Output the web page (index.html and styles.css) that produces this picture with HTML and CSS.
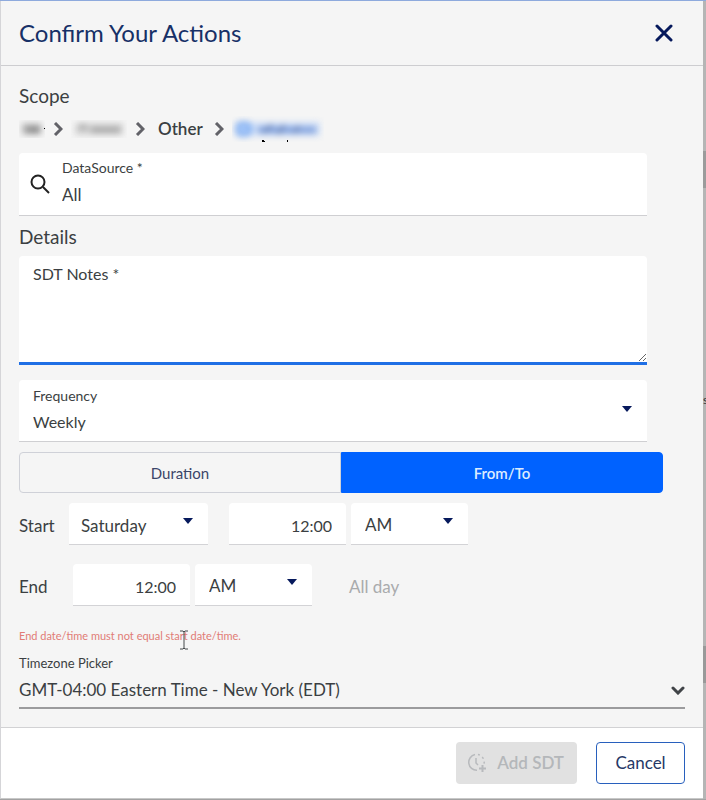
FILE: index.html
```html
<!DOCTYPE html>
<html lang="en">
<head>
<meta charset="utf-8">
<meta name="viewport" content="width=device-width, initial-scale=1">
<title>Confirm Your Actions</title>
<link rel="stylesheet" href="styles.css">
</head>
<body>
<main class="dialog" role="dialog" aria-labelledby="title">
  <header class="dialog-header">
    <h1 id="title">Confirm Your Actions</h1>
    <button class="close" type="button" aria-label="Close">
      <svg width="18" height="18" viewBox="0 0 18 18"><path d="M2 2l14 14M16 2L2 16" fill="none" stroke="#06195c" stroke-width="3" stroke-linecap="round"/></svg>
    </button>
  </header>

  <form class="dialog-body">
    <h2>Scope</h2>
    <nav class="crumbs" aria-label="Scope">
      <span class="redacted"><svg width="26" height="18" viewBox="0 0 26 18"><g class="haze"><path d="M3 9h19" stroke="#b4b4b4" stroke-width="11"/><path d="M8 10h13" stroke="#858585" stroke-width="5"/></g><rect x="25" y="8" width="1" height="1" fill="#000"/></svg></span>
      <svg class="chevron" width="10" height="14" viewBox="0 0 10 14"><path d="M2 1l6 6-6 6"/></svg>
      <span class="redacted"><svg width="56" height="18" viewBox="0 0 56 18"><g class="haze"><path d="M4 9h48" stroke="#d2d2d2" stroke-width="12"/><path d="M9 7h6M20 10h29" stroke="#a2a2a2" stroke-width="5"/></g></svg></span>
      <svg class="chevron" width="10" height="14" viewBox="0 0 10 14"><path d="M2 1l6 6-6 6"/></svg>
      <span class="crumb">Other</span>
      <svg class="chevron" width="10" height="14" viewBox="0 0 10 14"><path d="M2 1l6 6-6 6"/></svg>
      <span class="redacted"><svg width="92" height="26" viewBox="0 0 92 26"><g class="haze"><path d="M4 13h84" stroke="#cfdff8" stroke-width="14"/><rect x="5" y="7" width="13" height="12" rx="4" fill="#a9c9f8" stroke="#6fa3f0" stroke-width="3"/><path d="M26 14h58" fill="none" stroke="#86a5de" stroke-width="7"/><path d="M32 16l8-7M46 18l6-9M62 17l5-7" stroke="#6a82b4" stroke-width="3"/></g><path d="M30 25h2M32 26h1M55 25h1" stroke="#000" stroke-width="2"/></svg></span>
    </nav>

    <div class="field search-field">
      <svg class="search-icon" width="20" height="20" viewBox="0 0 20 20"><circle cx="8" cy="8" r="6.500"/><path d="M13 13l6 6"/></svg>
      <div class="stack">
        <label for="source">DataSource *</label>
        <input id="source" type="text" value="All">
      </div>
    </div>

    <h2 class="details">Details</h2>
    <div class="field notes-field">
      <label for="notes">SDT Notes *</label>
      <textarea id="notes"></textarea>
    </div>

    <div class="field frequency-field">
      <label for="frequency">Frequency</label>
      <div class="picker">
        <select id="frequency"><option>Weekly</option></select>
        <svg class="caret" width="10" height="6" viewBox="0 0 10 6"><path d="M0 0h10L5 6z"/></svg>
      </div>
    </div>

    <div class="toggle">
      <button type="button">Duration</button>
      <button type="button" class="active" aria-pressed="true">From/To</button>
    </div>

    <div class="row">
      <label for="start-day">Start</label>
      <div class="picker box day">
        <select id="start-day"><option>Saturday</option></select>
        <svg class="caret" width="10" height="6" viewBox="0 0 10 6"><path d="M0 0h10L5 6z"/></svg>
      </div>
      <input class="box time" type="text" value="12:00" aria-label="Start time">
      <div class="picker box">
        <select aria-label="Start AM or PM"><option>AM</option></select>
        <svg class="caret" width="10" height="6" viewBox="0 0 10 6"><path d="M0 0h10L5 6z"/></svg>
      </div>
    </div>

    <div class="row end-row">
      <label for="end-time">End</label>
      <input id="end-time" class="box time" type="text" value="12:00">
      <div class="picker box">
        <select aria-label="End AM or PM"><option>AM</option></select>
        <svg class="caret" width="10" height="6" viewBox="0 0 10 6"><path d="M0 0h10L5 6z"/></svg>
      </div>
      <span class="all-day">All day</span>
    </div>

    <p class="error">End date/time must not equal start date/time.
      <svg class="pointer" width="10" height="20" viewBox="0 0 10 20"><path d="M1 1h3l1 1 1-1h3M5 2v16M1 19h3l1-1 1 1h3"/></svg>
    </p>

    <div class="timezone">
      <label for="zone">Timezone Picker</label>
      <div class="picker">
        <select id="zone"><option>GMT-04:00 Eastern Time - New York (EDT)</option></select>
        <svg class="down" width="14" height="9" viewBox="0 0 14 9"><path d="M2 2l5 5 5-5"/></svg>
      </div>
    </div>
  </form>

  <footer class="dialog-footer">
    <button class="add" type="button" disabled>
      <svg width="20" height="20" viewBox="0 0 20 20"><path d="M8 1.500A8 8 0 0 0 10 17.300"/><path d="M11 1.500A8 8 0 0 1 17 11" stroke-dasharray="2 3"/><path d="M9 5v5l2 2"/><path d="M15.500 12v7M12 15.500h7" stroke-width="2"/></svg>
      Add SDT
    </button>
    <button class="cancel" type="button">Cancel</button>
  </footer>
</main>
<aside class="backdrop">s</aside>
</body>
</html>
```
FILE: styles.css
```css
* { box-sizing: border-box; }

body {
  margin: 0;
  min-height: 100vh;
  display: grid;
  grid-template-columns: 1fr 3px;
  border-top: 1px solid #8eaadd;
  border-bottom: 1px solid #a2a2a2;
  background: #f5f5f5;
  color: #3b3f42;
  font: 17px/24px Lato, "Liberation Sans", sans-serif;
}

h1, h2, p { margin: 0; font-weight: 400; }

button, input, select, textarea {
  font: inherit;
  color: inherit;
  margin: 0;
  padding: 0;
  border: 0;
  border-radius: 0;
  background: transparent;
  outline: 0;
}

.dialog {
  display: flex;
  flex-direction: column;
  border-left: 1px solid #d5d5d8;
  border-bottom: 1px solid #c8c8c8;
}

.dialog-header {
  display: flex;
  align-items: center;
  justify-content: space-between;
  height: 65px;
  padding: 0 30px 0 18px;
  border-bottom: 1px solid #cdcdd0;
}

h1 { font-size: 24px; line-height: 32px; color: #173067; }

.close { display: flex; }

.dialog-body {
  flex: 1;
  display: flex;
  flex-direction: column;
  padding: 18px;
}

h2 { font-size: 19px; line-height: 24px; }

.crumbs {
  display: flex;
  align-items: center;
  gap: 8px;
  height: 24px;
  margin: 9px 0 12px;
}

.crumb { font-size: 17px; font-weight: 600; padding: 0 3px 0 5px; }
.redacted { display: flex; }
.haze { filter: blur(3px); }
.chevron path { fill: none; stroke: #626268; stroke-width: 3; }

.field {
  margin-right: 38px;
  background: #fff;
  border-bottom: 1px solid #cfcfd2;
  border-radius: 4px 4px 0 0;
}

.field label { font-size: 14px; line-height: 20px; display: block; }

.search-field { display: flex; align-items: center; gap: 12px; height: 63px; padding-left: 11px; }
.search-icon { fill: none; stroke: #222; stroke-width: 2; }
.stack { flex: 1; }
.stack input { display: block; width: 100%; height: 32px; }

.details { margin: 9px 0 7px; }

.notes-field { display: flex; flex-direction: column; height: 109px; border-bottom: 3px solid #1f6fe5; }
.notes-field label { padding: 6px 14px 0; font-size: 16px; line-height: 24px; }
.notes-field textarea { flex: 1; width: 100%; padding: 0 14px; resize: vertical; }

.frequency-field { height: 62px; margin-top: 15px; padding: 6px 14px 0; }
.frequency-field select { font-size: 16px; }

.picker { display: grid; align-items: center; }
.picker > * { grid-area: 1 / 1; }
.picker select { appearance: none; width: 100%; height: 32px; }
.picker svg { justify-self: end; pointer-events: none; }
.caret { fill: #06195c; margin: 0 15px 6px 0; }
.frequency-field .caret { margin: 0 1px 26px 0; }

.toggle { display: flex; height: 41px; margin: 10px 22px 10px 0; }
.toggle button { flex: 1; border: 1px solid #cfd1d8; border-radius: 4px 0 0 4px; font-size: 15px; color: #3b4569; }
.toggle .active { border-color: #0062ff; border-radius: 0 4px 4px 0; background: #0062ff; color: #dcecff; font-weight: 600; }

.row { display: flex; gap: 5px; align-items: center; }
.row label { width: 45px; padding-top: 4px; }
.box { width: 117px; height: 42px; background: #fff; border-bottom: 1px solid #d3d3d6; border-radius: 4px 4px 0 0; }
.box select { height: 41px; padding: 2px 0 0 14px; }
.box.day { width: 139px; margin-right: 16px; }
.box.day select { padding: 4px 0 0 12px; }
.time { padding: 4px 14px 0 0; text-align: right; font-size: 16px; }
.end-row { margin: 19px 0 18px; }
.end-row label { width: 49px; }
.all-day { margin-left: 32px; padding-top: 4px; color: #a9abad; }

.error { position: relative; font-size: 11px; line-height: 24px; color: #e17c76; }
.pointer { position: absolute; left: 160px; top: 6px; fill: none; stroke: #45484b; stroke-width: 1; }

.timezone { margin-top: 5px; border-bottom: 2px solid #9b9b9d; }
.timezone label { display: block; font-size: 13px; line-height: 20px; }
.timezone .picker { height: 34px; }
.down { fill: none; stroke: #404347; stroke-width: 3; stroke-linecap: round; }

.dialog-footer {
  display: flex;
  align-items: center;
  justify-content: flex-end;
  gap: 19px;
  height: 71px;
  padding: 0 18px;
  background: #fff;
  border-top: 1px solid #d2d2d4;
}

.dialog-footer button { height: 42px; border-radius: 4px; font-size: 17px; }
.add { display: flex; align-items: center; gap: 10px; padding: 0 13px 0 11px; background: #e1e1e1; color: #b4b7ba; font-weight: 600; }
.add svg { fill: none; stroke: #b8babd; stroke-width: 1.5; }
.cancel { width: 89px; border: 1px solid #2860bd; color: #263866; }

.backdrop {
  overflow: hidden;
  padding-top: 387px;
  font-size: 12px;
  color: #333;
  background: linear-gradient(#b5b5b5 150px, #9b9b9b 150px 187px, #b5b5b5 187px 645px, #999 645px 682px, #b5b5b5 682px);
}
```
